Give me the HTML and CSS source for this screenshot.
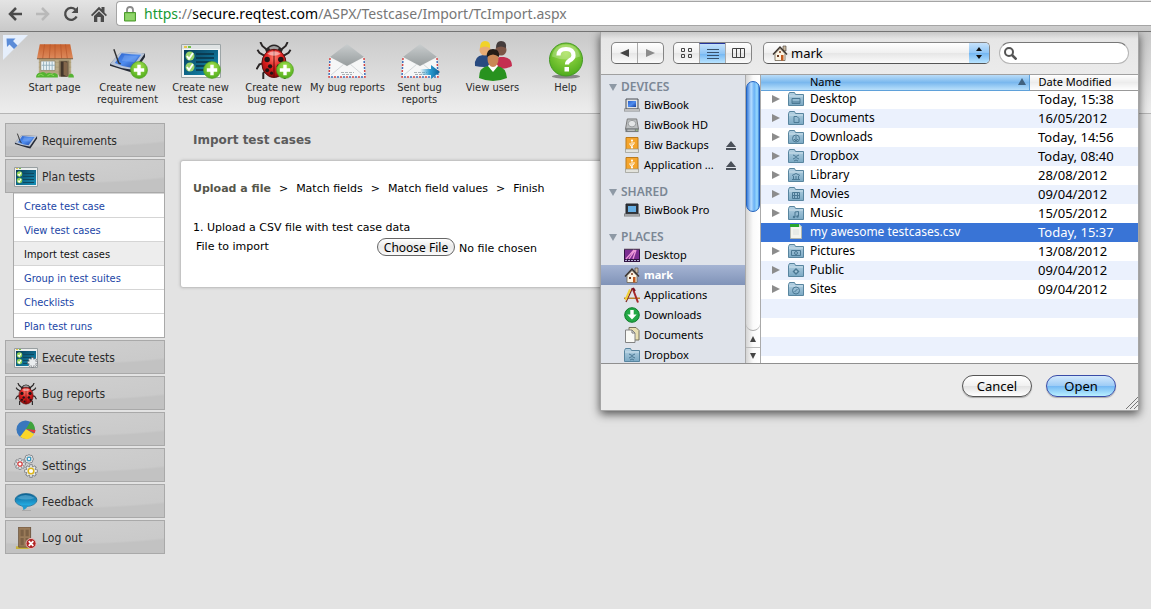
FILE: index.html
```html
<!DOCTYPE html>
<html lang="en">
<head>
<meta charset="utf-8">
<meta name="viewport" content="width=device-width, initial-scale=1">
<title>Import test cases</title>
<link rel="stylesheet" href="styles.css">
</head>
<body>
<svg class="sprite" aria-hidden="true">
  <defs>
    <linearGradient id="g-roof" x2="0" y2="1"><stop offset="0" stop-color="#c9622e"/><stop offset="1" stop-color="#dd8a5c"/></linearGradient>
    <linearGradient id="g-blue" x2="1" y2="1"><stop offset="0" stop-color="#2a5fc8"/><stop offset=".5" stop-color="#4f8df0"/><stop offset="1" stop-color="#173e98"/></linearGradient>
    <linearGradient id="g-teal" x2="1" y2="1"><stop offset="0" stop-color="#083c58"/><stop offset="1" stop-color="#1590b8"/></linearGradient>
    <radialGradient id="g-green" cx=".5" cy=".3" r=".7"><stop offset="0" stop-color="#a5e04e"/><stop offset="1" stop-color="#4fac1c"/></radialGradient>
    <radialGradient id="g-red" cx=".5" cy=".3" r=".7"><stop offset="0" stop-color="#ff7868"/><stop offset=".5" stop-color="#e01f1f"/><stop offset="1" stop-color="#8d0808"/></radialGradient>
    <linearGradient id="g-grey" x2="0" y2="1"><stop offset="0" stop-color="#c9cdce"/><stop offset="1" stop-color="#979d9e"/></linearGradient>
    <linearGradient id="g-arrow" x2="1"><stop offset="0" stop-color="#2b9bd0" stop-opacity="0"/><stop offset=".5" stop-color="#2b9bd0"/><stop offset="1" stop-color="#0a5e94"/></linearGradient>
    <linearGradient id="g-folder" x2="0" y2="1"><stop offset="0" stop-color="#b5d1e2"/><stop offset="1" stop-color="#7ba9c4"/></linearGradient>
    <linearGradient id="g-bubble" x2="0" y2="1"><stop offset="0" stop-color="#0c5f91"/><stop offset="1" stop-color="#27b4ea"/></linearGradient>
  </defs>
  <symbol id="plus" viewBox="0 0 18 18"><circle cx="9" cy="9" r="8.5" fill="url(#g-green)" stroke="#4d9c22" stroke-width=".6"/><path d="M7.3 3.8h3.4v3.5h3.5v3.4h-3.5v3.5H7.3v-3.5H3.8V7.3h3.5z" fill="#fff"/></symbol>
  <symbol id="house" viewBox="0 0 40 36">
    <path d="M3 15h34v18H3z" fill="#b9ab87"/><path d="M3 20h34M3 25h34M3 30h34" stroke="#a39672" stroke-width=".6"/>
    <path d="M4 1h32l3 15H1z" fill="url(#g-roof)"/><path d="M9 1 7 16M15 1l-1 15M20 1v15M26 1l1 15M31 1l2 15" stroke="#b4552c" stroke-width=".7"/><path d="M1 15.5h38v1.2H1z" fill="#7b5a3c"/>
    <path d="M5 18.500h15v10H5z" fill="#e9f2f5" stroke="#8b8064" stroke-width=".8"/><path d="M8 19v9M11 19v9M14 19v9M17 19v9M6 23h14" stroke="#8fabb9" stroke-width=".9"/>
    <path d="M24 18h11v17H24z" fill="#8c7b5c"/><path d="M26 19h7v16h-7z" fill="#43362b"/><path d="m29 19 4 1v15l-4-2z" fill="#82654a"/>
    <path d="M0 36q0-5 5-5 3-2 6 1 3-2 6 0 3-2 6 1v3zM34 36q0-5 4-4 2 1 2 4z" fill="#55b332"/><path d="M2 34q3-3 6 0m4 0q3-3 7 0" stroke="#8ddb5c" fill="none"/>
  </symbol>
  <symbol id="tablet" viewBox="0 0 38 26"><path d="M1 16 12 4l25 1v4L26 25l-5-1L1 18z" fill="#252a36"/><path d="M1 16 12 3.500q12 1 25 1.500L25 22q-12-1-24-6z" fill="#b9c4d6"/><path d="M6 15 13 5q10 1.500 20 1.500L23 20q-9-1-17-5z" fill="url(#g-blue)"/><path d="M13 13 16 7l14 1-4 6z" fill="#8fb8f6" opacity=".35"/><path d="M5 1l5 14 2 1" stroke="#333" stroke-width="1.500" fill="none"/></symbol>
  <symbol id="board" viewBox="0 0 40 34"><path d="M.5.5h39v33H.5z" fill="#f3f5f5" stroke="#9da5a7"/><path d="M1 1h38v4H1z" fill="#dfe3e4"/><path d="M3 2h3v2H3z" fill="#e4c54a"/><path d="M7 2h3v2H7z" fill="#70bf49"/><path d="M3 6h34v25H3z" fill="url(#g-teal)"/><path d="M15 10h18M15 14h18M15 18h15M15 22h18M15 26h16" stroke="#0a3244" stroke-width="1.400"/><circle cx="9" cy="12" r="4.500" fill="#9ad36a"/><circle cx="9" cy="23" r="4.500" fill="#9ad36a"/><path d="m6 12 2 3 4-6M6 23l2 3 4-6" fill="none" stroke="#fff" stroke-width="1.800"/></symbol>
  <symbol id="board-small" viewBox="0 0 24 20"><path d="M.5.5h23v19H.5z" fill="#eceeee" stroke="#989fa1"/><path d="M2 1h2v1H2z" fill="#e4c54a"/><path d="M5 1h2v1H5z" fill="#70bf49"/><path d="M2 3h20v15H2z" fill="url(#g-teal)"/><path d="M9 6.500h11M9 9.500h11M9 12.500h11M9 15.500h11" stroke="#0d4860"/><circle cx="5.500" cy="7" r="2.700" fill="#8fd055"/><circle cx="5.500" cy="13.500" r="2.700" fill="#8fd055"/><path d="m4 7 1.200 1.500L7 5.500M4 13.500 5.200 15 7 12" fill="none" stroke="#fff" stroke-width="1.200"/></symbol>
  <symbol id="bug" viewBox="0 0 36 38"><path d="M12 9 6 4 4 0M24 9l6-5 2-4M8 14l-5-3-2-3M28 14l5-3 2-3M7 22l-4 1-3 5M29 22l4 1 3 5M10 29l-3 3v6M26 29l3 3v6" fill="none" stroke="#292525" stroke-width="2"/><path d="M9 8q9-11 18 0l-2 5H11z" fill="#2a2626"/><path d="M13 6q5-4 10 0l-1 2h-8z" fill="#a1a1a1"/><ellipse cx="18" cy="22" rx="12.500" ry="14.500" fill="url(#g-red)" stroke="#561010"/><path d="M18 8v28" stroke="#5a0808"/><g fill="#231515"><circle cx="11" cy="18" r="2.800"/><circle cx="25" cy="18" r="2.800"/><circle cx="14" cy="25" r="2.200"/><circle cx="23" cy="25" r="2.200"/><circle cx="11" cy="29" r="2"/><circle cx="15.500" cy="32" r="1.600"/><circle cx="26" cy="29" r="2"/></g><path d="M11 12q7-5 14 0-7 4-14 0z" fill="#fff" opacity=".5"/></symbol>
  <symbol id="mail" viewBox="0 0 38 34"><path d="M2 13h34l1.500 20H.5z" fill="#f3f4f4"/><path d="M2 13 19 0l17 13-17 9z" fill="url(#g-grey)"/><path d="m2 14 17 9 17-9 1 18H1z" fill="#f6f7f7"/><path d="m2 14-1 19h36l-1-19" fill="none" stroke="#d54545" stroke-width="1.500" stroke-dasharray="2 4"/><path d="m2 14-1 19h36l-1-19" fill="none" stroke="#4070bb" stroke-width="1.500" stroke-dasharray="0 3 2 1"/><path d="m3 31 13-11M35 31 22 20" fill="none" stroke="#d2d6d8"/><path d="M13 28.500h13M14 30.500h10" stroke="#aab1b5" stroke-dasharray="3 1"/></symbol>
  <symbol id="users" viewBox="0 0 38 40"><path d="M1 25q-1-10 8-11h5q5 0 6 7v4q-10 2-19 0z" fill="#284a80"/><path d="M19 26q0-9 7-10h4q8 1 8 9-8 5-19 1z" fill="#c42e50"/><circle cx="11" cy="9" r="5.500" fill="#e9ac75"/><path d="M6 7q0-7 5-7 6 0 5 7-5-3-10 0z" fill="#f1d329"/><circle cx="27" cy="9" r="5.500" fill="#7c5546"/><path d="M22 7q0-7 5-7 6 0 5 7-5-3-10 0z" fill="#443c3c"/><path d="M5 37q0-11 9-12h9q9 1 10 12-14 6-28 0z" fill="#28921f"/><path d="m14 25 5 6 5-6-2-3h-6z" fill="#fff"/><ellipse cx="19" cy="18" rx="5.500" ry="8" fill="#c98756"/><path d="M13 16q-1-8 6-8t6 8q-6-5-12 0z" fill="#241c17"/></symbol>
  <symbol id="help" viewBox="0 0 36 36"><ellipse cx="18" cy="34" rx="14" ry="2" fill="#888"/><circle cx="18" cy="17" r="16.500" fill="url(#g-green)" stroke="#439824"/><path d="M4 14q2-12 14-12t14 12q-14 6-28 0z" fill="#fff" opacity=".23"/><path d="M10.500 13q0-6.500 7.500-6.500t7.500 6.500q0 3-4 5-2.500 1.500-2.500 4" fill="none" stroke="#fff" stroke-width="4.200"/><path d="M16.500 24.500h4.500v4.500h-4.500z" fill="#fff"/></symbol>
  <symbol id="sendarrow" viewBox="0 0 20 14"><path d="M0 4h11V0l9 7-9 7v-4H0z" fill="url(#g-arrow)"/></symbol>
  <symbol id="gear" viewBox="0 0 14 14"><path d="M7 .3v13.400M.3 7h13.400M2.300 2.300l9.400 9.400M11.700 2.300l-9.400 9.400" stroke="#7c7f84" stroke-width="3.200"/><circle cx="7" cy="7" r="4.800" fill="#7c7f84"/><path d="M7 1.200v11.600M1.200 7h11.600M3 3l8 8M11 3l-8 8" stroke="#e9ecee" stroke-width="1.800"/><circle cx="7" cy="7" r="4.100" fill="#e9ecee"/></symbol>
  <symbol id="pie" viewBox="0 0 22 22"><circle cx="10.500" cy="10.500" r="10" fill="#3977bd"/><path d="m11 10 9 5.500Q17 21.500 10.500 21 7 20.500 4.500 18.500z" fill="#fbd628"/><path d="m11 10 5-8.500q4.500 3 5 9.500z" fill="#3fa33c"/><path d="m11 10 10.500 1-.8 3.500z" fill="#e03a3a"/></symbol>
  <symbol id="settings" viewBox="0 0 24 24"><use href="#gear" x="0" y="4" width="12" height="12"/><use href="#gear" x="10" y="0" width="10" height="10"/><use href="#gear" x="10" y="10" width="14" height="14"/><circle cx="6" cy="10" r="2.200" fill="#fff" stroke="#cf4040" stroke-width="1.300"/><circle cx="15" cy="5" r="1.800" fill="#fff" stroke="#3497be" stroke-width="1.300"/><circle cx="17" cy="17" r="2.800" fill="#fff" stroke="#ddb71d" stroke-width="1.500"/></symbol>
  <symbol id="bubble" viewBox="0 0 24 18"><ellipse cx="12" cy="7" rx="11" ry="6.500" fill="url(#g-bubble)" stroke="#17648c" stroke-width=".7"/><path d="M7 12h7q-1 4-5 5 1-2-2-5z" fill="#2199ce"/><path d="M3 5q8-6 18 0-9 3-18 0z" fill="#73bee0" opacity=".5"/><path d="M8 17.500h9" stroke="#aaa"/></symbol>
  <symbol id="door" viewBox="0 0 24 24"><path d="M1 21h16v3H1z" fill="#c7b13b"/><path d="M4 0h13v22H4z" fill="#9a7b59" stroke="#6b543d"/><path d="M6 3h3.500v7H6zM11.500 3H15v7h-3.500zM6 12h3.500v8H6zM11.500 12H15v8h-3.500z" fill="#7c6145"/><circle cx="17.500" cy="18" r="5.500" fill="#b02323" stroke="#e8c5c5"/><path d="m15 15.500 5 5m0-5-5 5" stroke="#fff" stroke-width="2"/></symbol>
  <symbol id="home" viewBox="0 0 16 16"><path d="M11 1h3v5h-3z" fill="#c9b9a0" stroke="#443b33" stroke-width=".6"/><path d="M3 8.500 8 3.500l5 5v7H3z" fill="#fbf3e2" stroke="#6d6252" stroke-width=".8"/><path d="M1 9.500 8 2l7 7.500" fill="none" stroke="#3c342d" stroke-width="1.400"/><path d="M9 10h2.500v5.500H9z" fill="#c15a1e"/><path d="M5 10h2v2H5z" fill="#6c3c24"/><circle cx="8" cy="7" r="1" fill="#7b3c1e"/></symbol>
  <symbol id="laptop" viewBox="0 0 16 14"><path d="M2 1h12v10H2z" fill="#dfe2e5" stroke="#484d54"/><path d="M4 3h8v6H4z" fill="url(#g-blue)"/><path d="M0 11h16v2H0z" fill="#eef0f2" stroke="#666" stroke-width=".7"/></symbol>
  <symbol id="laptop-dark" viewBox="0 0 16 14"><path d="M2 1h12v10H2z" fill="#30343b" stroke="#24272d"/><path d="M4 3h8v6H4z" fill="#66aee3"/><path d="M0 11h16v2H0z" fill="#c9cdd1" stroke="#555" stroke-width=".7"/></symbol>
  <symbol id="disk" viewBox="0 0 16 16"><path d="M3 1h10l2 11H1z" fill="#bcbfc1" stroke="#777"/><path d="M1 11h14v4H1z" fill="#777c7f"/><ellipse cx="8" cy="6" rx="4" ry="3.500" fill="#e4e6e7" stroke="#969a9c"/><path d="M3 13h8" stroke="#dfdfdf"/><path d="M12 12.500h2v1h-2z" fill="#a9da80"/></symbol>
  <symbol id="usb" viewBox="0 0 16 16"><path d="M2 .5h12v12H2z" fill="#f5a52c" stroke="#bb7a1b"/><path d="M1.500 12h13v3.500h-13z" fill="#e3e3dc" stroke="#96968e" stroke-width=".7"/><path d="M8 11V3M8 9.500 6 8V6M8 8.500 10 7V5" fill="none" stroke="#fff" stroke-width=".9"/><path d="m6.800 4 1.200-2 1.200 2z" fill="#fff"/><circle cx="8" cy="10.500" r="1" fill="#fff"/></symbol>
  <symbol id="eject" viewBox="0 0 10 9"><path d="m0 6 5-6 5 6zM0 7h10v2H0z" fill="currentColor"/></symbol>
  <symbol id="screen" viewBox="0 0 16 14"><path d="M0 0h16v14H0z" fill="#301342"/><path d="M1 2h14v9H1z" fill="#7c2d91"/><path d="m2 11 8-9M5 11l6-9M9 11l3-9" stroke="#ed98d8" stroke-width="1.300"/><path d="M1 12.500h14" stroke="#b7b2d6" stroke-dasharray="2 1"/><path d="M0 .7h16" stroke="#ddd"/></symbol>
  <symbol id="apps" viewBox="0 0 16 16"><path d="M0 10.500h16v1.500H0z" fill="#bb812c"/><path d="m8.500 1 5.500 14.500" stroke="#a62727" stroke-width="2"/><path d="M8.500 1 2 15" stroke="#7c2424" stroke-width="1.300"/><path d="M6 2.500 1.500 13" stroke="#f0d038" stroke-width="2"/><path d="m9 1 2 3" stroke="#712" stroke-width="2"/></symbol>
  <symbol id="down" viewBox="0 0 16 16"><circle cx="8" cy="8" r="7.300" fill="#22a845" stroke="#0e7c29"/><path d="M6.300 3h3.400v4.500h3L8 12.500 3.300 7.500h3z" fill="#fff"/></symbol>
  <symbol id="docs" viewBox="0 0 16 16"><path d="M5 .5h7l3 3V13H5z" fill="#e8dfb1" stroke="#77735c"/><path d="M1.500 3H8l3 3v9.500H1.500z" fill="#f9f9f5" stroke="#838383"/><path d="M8 3v3h3" fill="none" stroke="#777"/></symbol>
  <symbol id="folder" viewBox="0 0 16 14"><path d="M.5 13.500v-11l1-2h5l1 2h8v11z" fill="url(#g-folder)" stroke="#58859f"/><path d="M1 4h14" stroke="#cbdfea"/></symbol>
  <symbol id="csv" viewBox="0 0 12 15"><path d="M.5.5H9l2.500 2.500v11.500H.5z" fill="#f4f5ee" stroke="#b2b7b0"/><path d="M0 0h9v3H0z" fill="#29a52c"/><path d="M9 0v3h3" fill="#d3e2ce"/><path d="M3 6h6M3 8h6M3 10h6" stroke="#dde2df"/></symbol>
</svg>

<header class="browser">
  <nav class="browser-nav" aria-label="Browser">
    <button class="plain" aria-label="Back"><svg width="16" height="14" viewBox="0 0 16 14"><path d="M15 7H3m6-6L3 7l6 6" fill="none" stroke="#4b4b4b" stroke-width="2.500"/></svg></button>
    <button class="plain" aria-label="Forward" disabled><svg width="16" height="14" viewBox="0 0 16 14"><path d="M1 7h12M7 1l6 6-6 6" fill="none" stroke="#b9b9b9" stroke-width="2.500"/></svg></button>
    <button class="plain" aria-label="Reload"><svg width="16" height="16" viewBox="0 0 16 16"><path d="M13.600 10.500A6 6 0 1 1 12.300 3.500" fill="none" stroke="#4b4b4b" stroke-width="2.300"/><path d="M15 .5v6.500H8.500z" fill="#4b4b4b"/></svg></button>
    <button class="plain" aria-label="Home"><svg width="16" height="16" viewBox="0 0 16 16"><path d="M0 9 8 .8l2.500 2.500V1h3v5.500L16 9l-1.200 1.200L8 3.800l-6.800 6.400z" fill="#4b4b4b"/><path d="m3 10 5-4.700 5 4.700v6H9.700v-5H6.300v5H3z" fill="#4b4b4b"/></svg></button>
  </nav>
  <div class="address">
    <svg width="12" height="16" viewBox="0 0 12 16"><path d="M3 8V4q0-3 3-3t3 3v4" fill="none" stroke="#8b8b8b" stroke-width="1.800"/><path d="M.5 6.500h11v8.500H.5z" fill="#7dc957" stroke="#4d9a2e"/><path d="M1.500 9h9M1.500 11h9M1.500 13h9" stroke="#a4e080"/></svg>
    <div class="url" role="textbox" aria-label="Address" tabindex="0"><span class="scheme">https</span><span>://</span><span class="host">secure.reqtest.com</span><span>/ASPX/Testcase/Import/TcImport.aspx</span></div>
  </div>
</header>

<nav class="toolbar" aria-label="Shortcuts">
  <button class="corner" aria-label="Collapse"><svg width="25" height="25" viewBox="0 0 25 25"><path d="M0 0h25L0 25z" fill="#e6effc"/><path d="M3.500 3.500h9L10 6l4.500 4.500-3.500 3.500L6.500 9.500 4 12z" fill="#5b8cd8"/></svg></button>
  <a class="tool" href="#"><span class="tool-icon"><svg width="38" height="35"><use href="#house"/></svg></span>Start page</a>
  <a class="tool" href="#"><span class="tool-icon"><svg width="37" height="26"><use href="#tablet"/></svg><svg class="badge" width="18" height="18"><use href="#plus"/></svg></span>Create new requirement</a>
  <a class="tool" href="#"><span class="tool-icon"><svg width="40" height="34"><use href="#board"/></svg><svg class="badge" width="18" height="18"><use href="#plus"/></svg></span>Create new test case</a>
  <a class="tool" href="#"><span class="tool-icon"><svg width="36" height="37"><use href="#bug"/></svg><svg class="badge" width="18" height="18"><use href="#plus"/></svg></span>Create new bug report</a>
  <a class="tool" href="#"><span class="tool-icon"><svg width="38" height="34"><use href="#mail"/></svg></span>My bug reports</a>
  <a class="tool" href="#"><span class="tool-icon"><svg width="38" height="34"><use href="#mail"/></svg><svg class="badge" width="20" height="14"><use href="#sendarrow"/></svg></span>Sent bug reports</a>
  <a class="tool" href="#"><span class="tool-icon"><svg width="38" height="40"><use href="#users"/></svg></span>View users</a>
  <a class="tool" href="#"><span class="tool-icon"><svg width="36" height="37"><use href="#help"/></svg></span>Help</a>
</nav>

<div class="page">
  <nav class="menu" aria-label="Main menu">
    <a class="menu-item" href="#"><svg width="24" height="16"><use href="#tablet"/></svg>Requirements</a>
    <div class="menu-group">
      <a class="menu-item" href="#"><svg width="24" height="20"><use href="#board-small"/></svg>Plan tests</a>
      <div class="submenu">
        <a href="#">Create test case</a>
        <a href="#">View test cases</a>
        <a class="current" href="#" aria-current="page">Import test cases</a>
        <a href="#">Group in test suites</a>
        <a href="#">Checklists</a>
        <a href="#">Plan test runs</a>
      </div>
    </div>
    <a class="menu-item" href="#"><svg width="24" height="20" viewBox="0 0 24 20"><use href="#board-small" width="24" height="20"/><use href="#gear" x="13" y="9" width="11" height="11"/></svg>Execute tests</a>
    <a class="menu-item" href="#"><svg width="24" height="22"><use href="#bug"/></svg>Bug reports</a>
    <a class="menu-item" href="#"><svg width="24" height="20"><use href="#pie"/></svg>Statistics</a>
    <a class="menu-item" href="#"><svg width="24" height="24"><use href="#settings"/></svg>Settings</a>
    <a class="menu-item" href="#"><svg width="24" height="18"><use href="#bubble"/></svg>Feedback</a>
    <a class="menu-item" href="#"><svg width="24" height="22"><use href="#door"/></svg>Log out</a>
  </nav>

  <main class="content">
    <h1>Import test cases</h1>
    <form class="panel">
      <ol class="steps">
        <li aria-current="step">Upload a file</li>
        <li>Match fields</li>
        <li>Match field values</li>
        <li>Finish</li>
      </ol>
      <p class="hint">1. Upload a CSV file with test case data</p>
      <div class="field">
        <label for="import-file">File to import</label>
        <input id="import-file" type="file">
      </div>
    </form>
  </main>
</div>

<section class="dialog" role="dialog" aria-label="Open file">
  <div class="dialog-bar">
    <div class="segments nav-segments">
      <button aria-label="Back"><svg width="9" height="8"><path d="M9 0v8L0 4z" fill="#444"/></svg></button>
      <button aria-label="Forward"><svg width="9" height="8"><path d="M0 0v8l9-4z" fill="#8b8b8b"/></svg></button>
    </div>
    <div class="segments view-segments">
      <button aria-label="Icons"><svg width="12" height="10"><path d="M.5.5h3v3h-3zM7.500.5h3v3h-3zM.5 6.500h3v3h-3zM7.500 6.500h3v3h-3z" fill="none" stroke="#444"/></svg></button>
      <button class="on" aria-label="List" aria-pressed="true"><svg width="12" height="11"><path d="M0 1.500h12M0 4.500h12M0 7.500h12M0 10.500h12" stroke="#37516c"/></svg></button>
      <button aria-label="Columns"><svg width="13" height="11"><path d="M.5.5h12v9H.5zM4.500.5v9M8.500.5v9" fill="none" stroke="#444"/></svg></button>
    </div>
    <div class="popup">
      <svg class="popup-icon" width="16" height="16"><use href="#home"/></svg>
      <select aria-label="Folder"><option>mark</option></select>
      <span class="popup-arrows"><svg width="6" height="12"><path d="m0 4 3-4 3 4zM0 8l3 4 3-4z" fill="#111"/></svg></span>
    </div>
    <div class="search">
      <svg width="13" height="13"><circle cx="5" cy="5" r="4" fill="none" stroke="#555" stroke-width="2"/><path d="m8 8 4.500 4.500" stroke="#555" stroke-width="2.500"/></svg>
      <input type="search" aria-label="Search">
    </div>
  </div>

  <div class="dialog-body">
    <nav class="places" aria-label="Places">
      <h2>DEVICES</h2>
      <a href="#"><svg width="16" height="14"><use href="#laptop"/></svg><span>BiwBook</span></a>
      <a href="#"><svg width="16" height="15"><use href="#disk"/></svg><span>BiwBook HD</span></a>
      <a href="#"><svg width="16" height="16"><use href="#usb"/></svg><span>Biw Backups</span><svg class="eject" width="10" height="9"><use href="#eject"/></svg></a>
      <a href="#"><svg width="16" height="16"><use href="#usb"/></svg><span>Application ...</span><svg class="eject" width="10" height="9"><use href="#eject"/></svg></a>
      <h2>SHARED</h2>
      <a href="#"><svg width="16" height="14"><use href="#laptop-dark"/></svg><span>BiwBook Pro</span></a>
      <h2>PLACES</h2>
      <a href="#"><svg width="16" height="14"><use href="#screen"/></svg><span>Desktop</span></a>
      <a class="selected" href="#"><svg width="16" height="16"><use href="#home"/></svg><span>mark</span></a>
      <a href="#"><svg width="16" height="16"><use href="#apps"/></svg><span>Applications</span></a>
      <a href="#"><svg width="16" height="16"><use href="#down"/></svg><span>Downloads</span></a>
      <a href="#"><svg width="16" height="16"><use href="#docs"/></svg><span>Documents</span></a>
      <a href="#"><svg width="16" height="14" viewBox="0 0 16 14"><use href="#folder"/><path d="m5 6 3 1.500L11 6M5 10l3-1.500 3 1.500M6 12l2-1 2 1" fill="none" stroke="#4b7893"/></svg><span>Dropbox</span></a>
    </nav>
    <div class="scrollbar" aria-hidden="true">
      <div class="track"><div class="thumb"></div></div>
      <div class="arrow"><svg width="6" height="6"><path d="M0 6h6L3 0z" fill="#444"/></svg></div>
      <div class="arrow"><svg width="6" height="6"><path d="M0 0h6L3 6z" fill="#444"/></svg></div>
    </div>
    <div class="files">
      <table>
        <thead><tr><th class="sorted" aria-sort="ascending">Name<svg width="8" height="7"><path d="M0 7h8L4 0z" fill="#40627f"/></svg></th><th class="date">Date Modified</th></tr></thead>
        <tbody>
          <tr><td><div class="file"><i class="twist"></i><svg width="16" height="14" viewBox="0 0 16 14"><use href="#folder"/><path d="M4 6.500h8v5H4zM4 10h8" fill="none" stroke="#4b7893"/></svg>Desktop</div></td><td class="when">Today, 15:38</td></tr>
          <tr><td><div class="file"><i class="twist"></i><svg width="16" height="14" viewBox="0 0 16 14"><use href="#folder"/><path d="M6 5.500h3l2 2v4H6z" fill="none" stroke="#4b7893"/></svg>Documents</div></td><td class="when">16/05/2012</td></tr>
          <tr><td><div class="file"><i class="twist"></i><svg width="16" height="14" viewBox="0 0 16 14"><use href="#folder"/><circle cx="8" cy="8.500" r="3.500" fill="none" stroke="#4b7893"/><path d="M8 6v5M6 9l2 2 2-2" fill="none" stroke="#4b7893"/></svg>Downloads</div></td><td class="when">Today, 14:56</td></tr>
          <tr><td><div class="file"><i class="twist"></i><svg width="16" height="14" viewBox="0 0 16 14"><use href="#folder"/><path d="m5 6 3 1.500L11 6M5 10l3-1.500 3 1.500M6 12l2-1 2 1" fill="none" stroke="#4b7893"/></svg>Dropbox</div></td><td class="when">Today, 08:40</td></tr>
          <tr><td><div class="file"><i class="twist"></i><svg width="16" height="14" viewBox="0 0 16 14"><use href="#folder"/><path d="m4 7.500 4-2 4 2M5.500 8v3M8 8v3M10.500 8v3M4 11.500h8" fill="none" stroke="#4b7893"/></svg>Library</div></td><td class="when">28/08/2012</td></tr>
          <tr><td><div class="file"><i class="twist"></i><svg width="16" height="14" viewBox="0 0 16 14"><use href="#folder"/><path d="M4.500 5.500h7v6h-7zM6.500 5.500v6M9.500 5.500v6M4.500 8.500h7" fill="none" stroke="#4b7893"/></svg>Movies</div></td><td class="when">09/04/2012</td></tr>
          <tr><td><div class="file"><i class="twist"></i><svg width="16" height="14" viewBox="0 0 16 14"><use href="#folder"/><path d="M7 11V6l3.500-.5V10" fill="none" stroke="#4b7893"/><circle cx="6" cy="11" r="1.200" fill="#4b7893"/><circle cx="9.500" cy="10.500" r="1.200" fill="#4b7893"/></svg>Music</div></td><td class="when">15/05/2012</td></tr>
          <tr class="picked" aria-selected="true"><td><div class="file"><i class="twist none"></i><svg width="16" height="15"><use href="#csv"/></svg>my awesome testcases.csv</div></td><td class="when">Today, 15:37</td></tr>
          <tr><td><div class="file"><i class="twist"></i><svg width="16" height="14" viewBox="0 0 16 14"><use href="#folder"/><path d="M3.500 6.500h9v5h-9z" fill="none" stroke="#4b7893"/><circle cx="8" cy="9" r="1.500" fill="none" stroke="#4b7893"/></svg>Pictures</div></td><td class="when">13/08/2012</td></tr>
          <tr><td><div class="file"><i class="twist"></i><svg width="16" height="14" viewBox="0 0 16 14"><use href="#folder"/><path d="m8 5 3.500 3.500L8 12 4.500 8.500z" fill="#4b7893"/><path d="m8 7 1.500 1.500L8 10 6.500 8.500z" fill="#a9c9dc"/></svg>Public</div></td><td class="when">09/04/2012</td></tr>
          <tr><td><div class="file"><i class="twist"></i><svg width="16" height="14" viewBox="0 0 16 14"><use href="#folder"/><circle cx="8" cy="8.500" r="3.500" fill="none" stroke="#4b7893"/><path d="m6.500 10 3-3" stroke="#4b7893"/></svg>Sites</div></td><td class="when">09/04/2012</td></tr>
        </tbody>
      </table>
    </div>
  </div>

  <div class="dialog-foot">
    <button class="pill">Cancel</button>
    <button class="pill primary">Open</button>
    <svg class="grip" width="12" height="12"><path d="M0 12 12 0M4 12l8-8M8 12l4-4" stroke="#777"/></svg>
  </div>
</section>
</body>
</html>
```
FILE: styles.css
```css
* { box-sizing: border-box; }

body {
  margin: 0;
  min-height: 100vh;
  display: flex;
  flex-direction: column;
  background: #e3e3e3;
  color: #000;
  font: 11px/14px "DejaVu Sans", Verdana, sans-serif;
}

svg { display: block; flex: none; }
a { color: inherit; text-decoration: none; }
button, input, select { font: inherit; color: inherit; }
.sprite { position: absolute; width: 0; height: 0; }

/* Browser bar */
.browser {
  display: flex;
  height: 32px;
  padding-bottom: 4px;
  align-items: center;
  background: linear-gradient(#e4e4e4, #c9c9c9);
  border-bottom: 1px solid #747474;
}
.browser-nav { display: flex; gap: 12px; padding: 0 9px 0 7px; }
.plain { padding: 0; border: 0; background: none; }
.address {
  flex: 1;
  display: flex;
  align-items: center;
  gap: 8px;
  height: 25px;
  padding-left: 7px;
  background: #fff;
  border: 1px solid #a5a5a5;
  border-right: 0;
  border-radius: 4px 0 0 4px;
}
.url { color: #777; font: 14px/18px "Noto Sans", sans-serif; }
.scheme { color: #159a33; }
.host { color: #000; }

/* Shortcut toolbar */
.toolbar {
  position: relative;
  display: flex;
  height: 82px;
  padding: 7px 0 0 18px;
  background: linear-gradient(#c9c9c9, #ededed);
  border-bottom: 1px solid #b5b5b5;
}
.corner { position: absolute; left: 3px; top: 3px; padding: 0; border: 0; background: none; }
.tool {
  width: 73px;
  color: #2b2b2b;
  font: 11px/12px "DejaVu Sans Condensed", "DejaVu Sans", sans-serif;
  text-align: center;
}
.tool:nth-of-type(5) { white-space: nowrap; }
.tool-icon {
  position: relative;
  display: flex;
  align-items: center;
  justify-content: center;
  width: 40px;
  height: 43px;
  margin: 0 auto;
}
.badge { position: absolute; right: 0; bottom: 3px; }

/* Page */
.page { display: flex; gap: 15px; padding: 9px 13px 0 5px; }
.menu {
  flex: none;
  width: 160px;
  display: flex;
  flex-direction: column;
  gap: 2px;
  color: #2b2b2b;
  font: 12px/16px "DejaVu Sans Condensed", "DejaVu Sans", sans-serif;
}
.menu-item {
  display: flex;
  align-items: center;
  gap: 4px;
  height: 34px;
  padding: 2px 8px 0;
  border: 1px solid #a9a9a9;
  background: radial-gradient(ellipse 180px 24px at 30% 0, #cfcfcf, #cacaca 92%, #c2c2c2 100%);
}
.submenu {
  margin-left: 8px;
  border: 1px solid #a9a9a9;
  border-top: 0;
  background: #fff;
  color: #1a45a6;
  font-size: 11px;
}
.submenu a { display: block; height: 24px; padding: 5px 10px 0; border-top: 1px solid #d5d5d5; }
.submenu .current { background: #ededed; color: #111; }

.content { flex: 1; min-width: 0; }
h1 { margin: 9px 13px 12px; color: #5c5c5c; font-size: 12px; line-height: 16px; }
.panel {
  min-height: 128px;
  padding: 21px 12px 20px;
  margin-right: 12px;
  background: #fff;
  border: 1px solid #c4c4c4;
  border-radius: 3px;
  box-shadow: 0 0 3px #bbb;
}
.steps { display: flex; margin: 0 0 25px; padding: 0; list-style: none; }
.steps li + li::before { content: ">"; margin: 0 8px; }
.steps [aria-current] { color: #56564a; font-weight: bold; }
.hint { margin: 0 0 3px; }
.field { display: flex; align-items: center; padding-left: 3px; }
.field label { width: 181px; }
.field input { border: 0; }
.field input::file-selector-button {
  width: 78px;
  height: 18px;
  margin: 0 4px 0 0;
  padding: 0;
  border: 1px solid #666;
  border-radius: 9px;
  background: linear-gradient(#fff, #e9e9e9 50%, #fafafa);
  font: 12px/15px "Noto Sans", sans-serif;
}

/* File dialog */
.dialog {
  position: absolute;
  left: 600px;
  right: 12px;
  top: 32px;
  display: flex;
  flex-direction: column;
  background: #ebebeb;
  border: 1px solid #a5a5a5;
  border-top: 0;
  box-shadow: 0 3px 9px rgba(0, 0, 0, .65);
  clip-path: inset(0 -12px -16px -12px);
  font: 12px/16px "Noto Sans", sans-serif;
}
.dialog-bar {
  display: flex;
  align-items: center;
  height: 43px;
  padding: 0 9px 0 10px;
  background: linear-gradient(#c8c8c8, #e6e6e6 7px, #ebebeb);
  border-bottom: 1px solid #a0a0a0;
}
.segments {
  display: flex;
  height: 22px;
  overflow: hidden;
  border: 1px solid #858585;
  border-bottom-color: #666;
  border-radius: 5px;
  background: linear-gradient(#fff, #f0f0f0 50%, #e6e6e6 51%, #fbfbfb);
}
.segments button {
  flex: 1;
  display: grid;
  place-items: center;
  padding: 0;
  border: 0;
  background: none;
}
.segments button + button { border-left: 1px solid #aaa; }
.segments .on { background: linear-gradient(#c6e2fb, #8fc5f5 50%, #73b6f2 51%, #b9e4ff); border-top: 1px solid #25359c; }
.nav-segments { width: 53px; margin-right: 9px; }
.view-segments { width: 79px; margin-right: 11px; }
.popup {
  position: relative;
  flex: 1;
  height: 22px;
  overflow: hidden;
  border: 1px solid #858585;
  border-bottom-color: #555;
  border-radius: 5px;
  background: linear-gradient(#fff, #f0f0f0 50%, #e6e6e6 51%, #fbfbfb);
}
.popup-icon { position: absolute; left: 8px; top: 2px; }
.popup select {
  width: 100%;
  height: 20px;
  padding: 0 24px 0 27px;
  border: 0;
  appearance: none;
  background: none;
  font-size: 13px;
}
.popup-arrows {
  position: absolute;
  right: 0;
  top: 0;
  display: grid;
  place-items: center;
  width: 20px;
  height: 20px;
  background: linear-gradient(#c6e2fb, #8fc5f5 50%, #73b6f2 51%, #b9e4ff);
  pointer-events: none;
}
.search {
  display: flex;
  align-items: center;
  gap: 4px;
  width: 130px;
  height: 22px;
  margin-left: 9px;
  padding: 0 8px 0 4px;
  border: 1px solid #b5b5b5;
  border-top-color: #777;
  border-radius: 11px;
  background: #fff;
}
.search input { flex: 1; min-width: 0; padding: 0; border: 0; outline: 0; background: none; }

.dialog-body { display: flex; height: 289px; border-bottom: 1px solid #8f8f8f; }
.places { flex: none; width: 144px; overflow: hidden; background: #dfe3ea; font-size: 11px; }
.places h2 {
  display: flex;
  align-items: center;
  gap: 4px;
  height: 16px;
  margin: 9px 0 0 8px;
  color: #7b8795;
  font: 600 12px/16px "Noto Sans", sans-serif;
}
.places h2:first-child { margin-top: 4px; }
.places h2::before { content: ""; border: 4px solid transparent; border-top: 7px solid #8e99a5; border-bottom: 0; }
.places a { display: flex; align-items: center; gap: 4px; height: 20px; padding: 0 9px 0 23px; white-space: nowrap; }
.places span { flex: 1; }
.eject { color: #4a5059; }
.places .selected { background: linear-gradient(#a5b4d3, #8093b8); color: #fff; font-weight: bold; }

.scrollbar {
  flex: none;
  display: flex;
  flex-direction: column;
  width: 16px;
  border: 1px solid #aaa;
  border-width: 0 1px;
  background: linear-gradient(90deg, #d4d4d4, #fafafa 50%, #fff);
}
.track { flex: 1; padding-top: 6px; border-bottom: 1px solid #aaa; border-radius: 0 0 8px 8px; }
.thumb {
  height: 131px;
  border: 1px solid #2362bd;
  border-radius: 7px;
  background: linear-gradient(90deg, #3d7fdb, #b5dcff 35%, #6ab1f5 60%, #9bdcff 85%, #3c82d8);
}
.arrow { display: grid; place-items: center; height: 16px; }
.arrow + .arrow { border-top: 1px solid #bbb; }

.files {
  flex: 1;
  overflow: hidden;
  background: repeating-linear-gradient(#fff 0 19px, #ebf1fd 19px 38px) 0 15px;
}
table { width: 100%; table-layout: fixed; border-collapse: collapse; }
th {
  height: 15px;
  padding: 0 8px 1px 49px;
  border-bottom: 1px solid #999;
  background: linear-gradient(#fff, #ececec 50%, #fff);
  font-size: 11px;
  font-weight: normal;
  line-height: 13px;
  text-align: left;
}
.sorted { border-right: 1px solid #5fa1da; border-bottom-color: #5fa1da; background: linear-gradient(#b9dcf8, #7ab8ee 50%, #b9e0fb); }
.sorted svg { float: right; margin: 3px -5px 0 0; }
.date { width: 109px; padding: 0 0 1px 9px; }
td { height: 19px; padding: 0 0 2px 9px; }
.when { font-size: 13px; }
.file { display: flex; align-items: center; gap: 6px; padding-left: 2px; }
.twist { width: 10px; border: 4px solid transparent; border-left: 8px solid #8c8c8c; border-right: 0; }
.twist.none { border-left-color: transparent; }
.picked { background: #3974d6; color: #fff; }

.dialog-foot {
  position: relative;
  display: flex;
  justify-content: flex-end;
  gap: 14px;
  height: 46px;
  padding: 11px 22px 0 0;
}
.pill {
  width: 70px;
  height: 22px;
  padding: 0;
  border: 1px solid #555;
  border-radius: 11px;
  background: linear-gradient(#fff, #f0f0f0 50%, #e2e2e2 51%, #fff);
  box-shadow: 0 1px 1px #aaa;
  font-size: 13px;
}
.primary { border-color: #3a4ca8; background: linear-gradient(#d3e9fc, #9ccbf6 50%, #74b8f4 51%, #b9f0ff); }
.grip { position: absolute; right: 0; bottom: 1px; }
```
